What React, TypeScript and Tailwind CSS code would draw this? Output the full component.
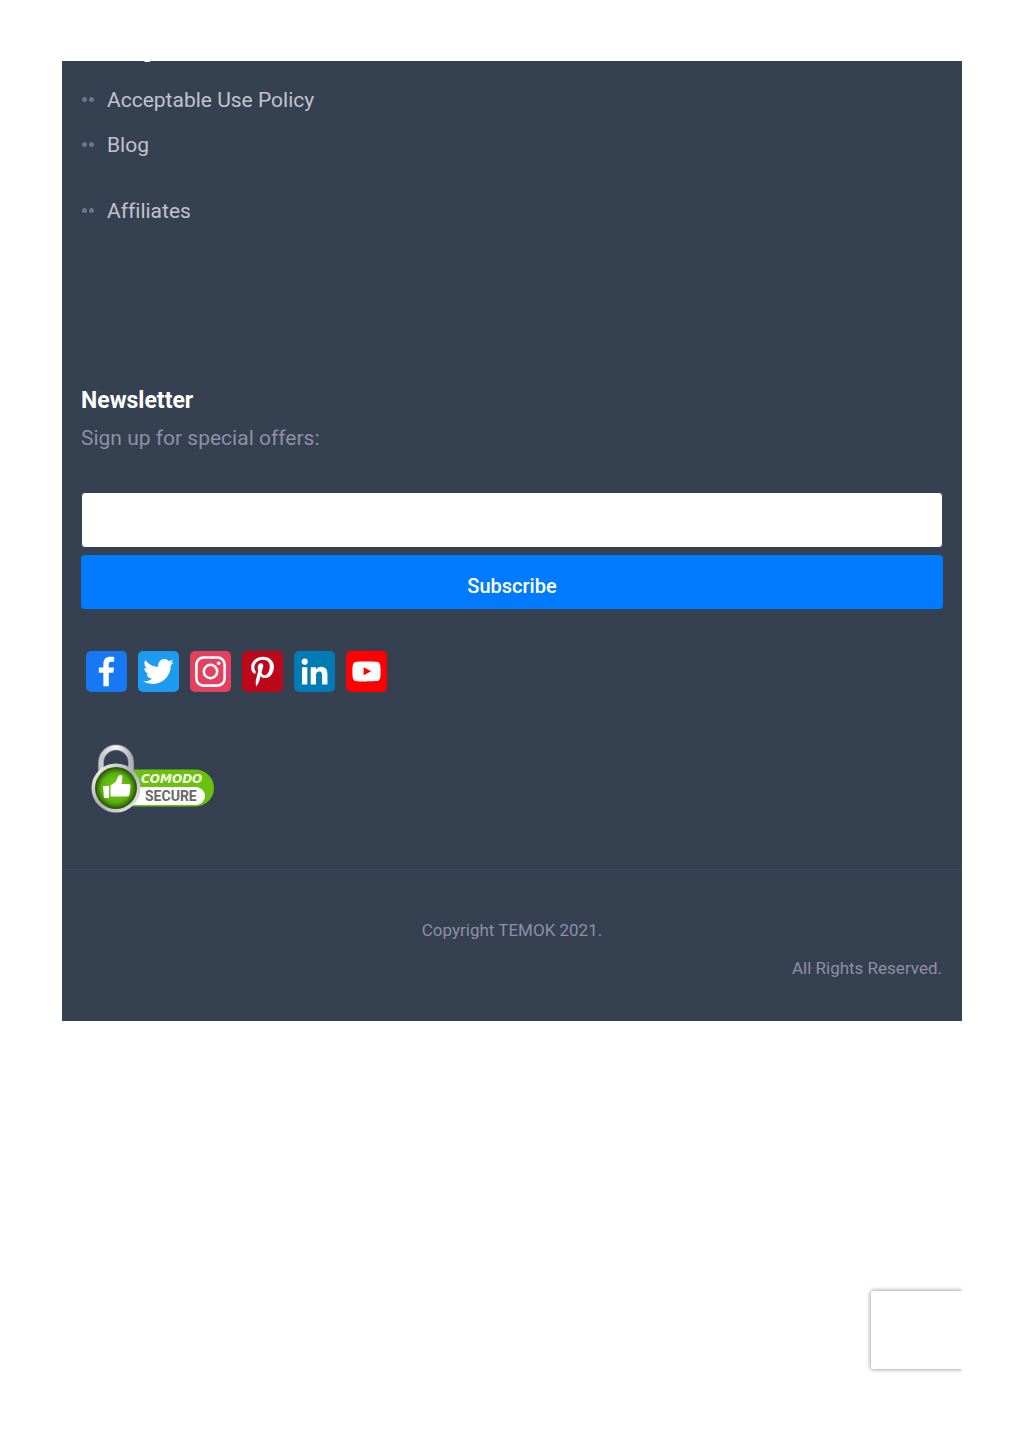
import type { ReactNode } from 'react'

const links = [
  { label: 'Acceptable Use Policy', className: 'mb-[15px]' },
  { label: 'Blog', className: 'mb-9' },
  { label: 'Affiliates', className: '' },
]

const socials: { name: string; color: string; icon: ReactNode }[] = [
  {
    name: 'Facebook',
    color: 'bg-[#1877f2]',
    icon: (
      <path d="M17.78 27.5V17.008h3.522l.527-4.09h-4.05v-2.61c0-1.182.33-1.99 2.023-1.99h2.166V4.66c-.375-.05-1.66-.16-3.155-.16-3.123 0-5.26 1.905-5.26 5.405v3.016h-3.53v4.09h3.53V27.5h4.223z" />
    ),
  },
  {
    name: 'Twitter',
    color: 'bg-[#1d9bf0]',
    icon: (
      <path d="M28 8.557a9.913 9.913 0 0 1-2.828.775 4.93 4.93 0 0 0 2.166-2.725 9.738 9.738 0 0 1-3.13 1.194 4.92 4.92 0 0 0-3.593-1.55 4.924 4.924 0 0 0-4.794 6.049c-4.09-.21-7.72-2.17-10.15-5.15a4.942 4.942 0 0 0-.665 2.477c0 1.71.87 3.214 2.19 4.1a4.968 4.968 0 0 1-2.23-.616v.06c0 2.39 1.7 4.38 3.952 4.83-.414.115-.85.174-1.297.174-.318 0-.626-.03-.928-.086a4.935 4.935 0 0 0 4.6 3.42 9.893 9.893 0 0 1-6.114 2.107c-.398 0-.79-.023-1.175-.068a13.953 13.953 0 0 0 7.55 2.213c9.056 0 14.01-7.507 14.01-14.013 0-.213-.005-.426-.015-.637.96-.695 1.795-1.56 2.455-2.55z" />
    ),
  },
  {
    name: 'Instagram',
    color: 'bg-[#e4405f]',
    icon: (
      <>
        <rect x="5" y="5" width="22" height="22" rx="5.6" fill="none" stroke="currentColor" strokeWidth="2" />
        <circle cx="16" cy="16" r="5.2" fill="none" stroke="currentColor" strokeWidth="2" />
        <circle cx="22.4" cy="9.6" r="1.4" />
      </>
    ),
  },
  {
    name: 'Pinterest',
    color: 'bg-[#bd081c]',
    icon: (
      <path d="M16.539 4.5c-6.277 0-9.442 4.5-9.442 8.253 0 2.272.86 4.293 2.705 5.046.303.125.574.005.662-.33.061-.231.205-.816.27-1.06.088-.331.053-.447-.191-.736-.532-.627-.873-1.439-.873-2.591 0-3.338 2.498-6.327 6.505-6.327 3.548 0 5.497 2.168 5.497 5.062 0 3.81-1.686 7.025-4.188 7.025-1.382 0-2.416-1.142-2.085-2.545.397-1.674 1.166-3.48 1.166-4.689 0-1.081-.581-1.983-1.782-1.983-1.413 0-2.548 1.462-2.548 3.419 0 1.247.421 2.091.421 2.091l-1.699 7.199c-.505 2.137-.076 4.755-.039 5.019.021.158.223.196.314.077.13-.17 1.813-2.247 2.384-4.324.162-.587.929-3.631.929-3.631.46.876 1.801 1.646 3.227 1.646 4.247 0 7.128-3.871 7.128-9.053.003-3.918-3.317-7.568-8.361-7.568z" />
    ),
  },
  {
    name: 'LinkedIn',
    color: 'bg-[#007bb5]',
    icon: (
      <path d="M6.227 12.61h4.19v13.48h-4.19V12.61zm2.095-6.7a2.43 2.43 0 0 1 0 4.86c-1.344 0-2.428-1.09-2.428-2.43s1.084-2.43 2.428-2.43m4.72 6.7h4.02v1.84h.058c.56-1.058 1.927-2.176 3.965-2.176 4.238 0 5.02 2.792 5.02 6.42v7.395h-4.183v-6.56c0-1.564-.03-3.574-2.178-3.574-2.18 0-2.514 1.7-2.514 3.46v6.668h-4.187V12.61z" />
    ),
  },
  {
    name: 'YouTube',
    color: 'bg-[#ff0000]',
    icon: (
      <path d="M26.78 11.6s-.215-1.515-.875-2.183c-.837-.876-1.774-.88-2.204-.932-3.075-.222-7.693-.222-7.693-.222h-.01s-4.618 0-7.697.222c-.43.05-1.368.056-2.205.932-.66.668-.874 2.184-.874 2.184S5 13.386 5 15.166v1.67c0 1.78.22 3.56.22 3.56s.215 1.516.874 2.184c.837.875 1.936.85 2.426.94 1.76.17 7.48.22 7.48.22s4.623-.007 7.7-.23c.43-.05 1.37-.056 2.205-.932.66-.668.875-2.184.875-2.184s.22-1.78.22-3.56v-1.67c0-1.78-.22-3.56-.22-3.56zm-13.052 7.254v-6.18l5.944 3.1-5.944 3.08z" />
    ),
  },
]

function ComodoSeal() {
  return (
    <svg width="145" height="85" viewBox="0 0 145 85" role="img" aria-label="Comodo Secure">
      <defs>
        <linearGradient id="ring" x1="0" y1="0" x2="1" y2="1">
          <stop offset="0" stopColor="#ffffff" />
          <stop offset="0.5" stopColor="#a9adb0" />
          <stop offset="1" stopColor="#f4f4f4" />
        </linearGradient>
        <linearGradient id="shackle" x1="0" y1="0" x2="1" y2="0">
          <stop offset="0" stopColor="#c4c6ca" />
          <stop offset="0.5" stopColor="#f6f6f8" />
          <stop offset="1" stopColor="#b0b2b8" />
        </linearGradient>
        <radialGradient id="disc">
          <stop offset="0" stopColor="#7fd01a" />
          <stop offset="0.75" stopColor="#5bb00c" />
          <stop offset="1" stopColor="#2c6a08" />
        </radialGradient>
      </defs>
      {/* Pill */}
      <rect x="34" y="34.500" width="99" height="37" rx="18.500" fill="#6cc010" />
      <path d="M50 52h65a9 9 0 0 1 0 18H48z" fill="#fff" />
      {/* Padlock */}
      <path d="M20 38V27.500a15 15 0 0 1 30 0V38" fill="none" stroke="#85888e" strokeWidth="6" />
      <path d="M20 38V27.500a15 15 0 0 1 30 0V38" fill="none" stroke="url(#shackle)" strokeWidth="4.500" />
      <circle cx="35" cy="53" r="24.500" fill="url(#ring)" />
      <circle cx="35" cy="53" r="21" fill="#34570f" />
      <circle cx="35" cy="53" r="19.500" fill="url(#disc)" />
      {/* Thumb */}
      <path d="M22 51h6v12h-5zM29.500 50.500l5-3.500 3-6q3-3 4 1l-1 7h7q2 0 2 2l-1 8q0 2.500-3 2.500h-16z" fill="#fff" />
      <text
        x="60"
        y="48"
        fontSize="12"
        fontWeight="700"
        fontStyle="italic"
        fill="#f4fbe6"
        className="font-['DejaVu_Sans',sans-serif]"
      >
        COMODO
      </text>
      <text x="64" y="66" fontSize="14" fontWeight="700" fill="#696969" className="font-['Roboto',sans-serif]">
        SECURE
      </text>
    </svg>
  )
}

export default function App() {
  return (
    <div className="bg-white px-[62px] pt-[61px] pb-[72px] font-['Roboto',sans-serif] [font-variant-ligatures:none]">
      <footer className="overflow-hidden bg-[#354051] text-[21px] leading-[30px] text-[#8f8fa6]">
        <div className="px-[19px]">
          <h4 className="-mt-[26px] mb-5 text-[23px] font-bold text-white">Pricing</h4>
          <ul>
            {links.map((link) => (
              <li key={link.label} className={link.className}>
                <a href="#" className="flex items-center text-[#c1c2d0]">
                  <span className="mr-[13px] flex gap-0.5 pb-0.5 pl-px" aria-hidden="true">
                    <span className="size-[5px] rounded-full bg-[#70758a]" />
                    <span className="size-[5px] rounded-full bg-[#70758a]" />
                  </span>
                  {link.label}
                </a>
              </li>
            ))}
          </ul>

          <h4 className="mt-40 text-[23px] font-bold text-white">Newsletter</h4>
          <label htmlFor="email" className="mt-[7px] block">
            Sign up for special offers:
          </label>
          <form className="mt-[39px]" onSubmit={(e) => e.preventDefault()}>
            <input
              id="email"
              type="email"
              className="block h-14 w-full rounded border border-[#354051] bg-white px-4 text-gray-800"
            />
            <button type="submit" className="mt-[7px] h-[54px] w-full rounded bg-[#007bff] pt-2 text-[20px] font-medium text-white">
              Subscribe
            </button>
          </form>

          <div className="mt-[42px] flex gap-[11px] pl-[5px]">
            {socials.map((s) => (
              <a key={s.name} href="#" aria-label={s.name} className={`size-[41px] rounded-[5px] text-white ${s.color}`}>
                <svg viewBox="0 0 32 32" fill="currentColor" className="size-full">
                  {s.icon}
                </svg>
              </a>
            ))}
          </div>

          <a href="#" className="mt-[43px] block w-fit">
            <ComodoSeal />
          </a>
        </div>

        <div className="mt-[49px] border-t border-[#414a5c] px-5 pt-[45px] pb-[38px] text-[17px]">
          <p className="text-center">Copyright TEMOK 2021.</p>
          <p className="mt-2 text-right">All Rights Reserved.</p>
        </div>
      </footer>

      <div className="mt-[262px] flex justify-end overflow-hidden py-2">
        <div className="h-[78px] w-[91px] rounded-l-xs bg-white shadow-[0_0_5px_#808080]" />
      </div>
    </div>
  )
}
